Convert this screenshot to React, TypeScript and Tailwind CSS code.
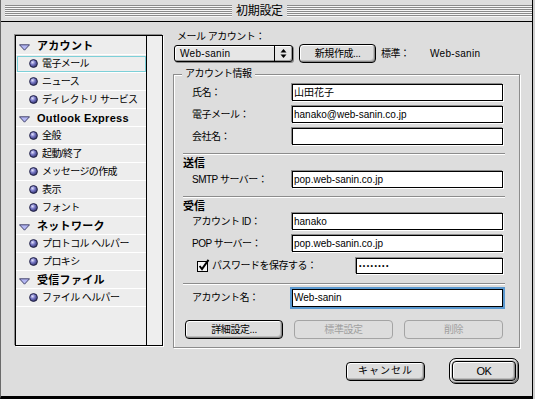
import React, { useId } from "react";

function Stripes({ className = "" }: { className?: string }) {
  return (
    <div className={`flex flex-col ${className}`}>
      {[0, 1, 2, 3, 4, 5].map((i) => (
        <React.Fragment key={i}>
          <div className="h-px bg-[#8a8a8a]" />
          <div className="h-px bg-[#f6f6f6]" />
        </React.Fragment>
      ))}
    </div>
  );
}

function Bullet() {
  const id = useId();
  return (
    <svg width="9" height="9" viewBox="0 0 9 9" className="shrink-0">
      <defs>
        <radialGradient id={id} cx="38%" cy="35%" r="70%">
          <stop offset="0%" stopColor="#e4e4ff" />
          <stop offset="45%" stopColor="#7676c4" />
          <stop offset="100%" stopColor="#2c2c66" />
        </radialGradient>
      </defs>
      <circle cx="4.5" cy="4.5" r="3.9" fill={`url(#${id})`} stroke="#1c1c3c" strokeWidth="0.9" />
    </svg>
  );
}

function Tri() {
  return (
    <svg width="11" height="7" viewBox="0 0 11 7" className="shrink-0 mt-[3px]">
      <path d="M0.5 0.8 H10.5 L5.5 6.2 Z" fill="#b3b6f2" stroke="#33335e" strokeWidth="0.9" />
    </svg>
  );
}

function Header({ label }: { label: string }) {
  return (
    <div className="h-[18px] flex items-center border-b border-b-white">
      <div className="ml-[3px]">
        <Tri />
      </div>
      <span className="ml-[7px] font-bold text-[11px] leading-[14px] tracking-[0.3px]">{label}</span>
    </div>
  );
}

function Item({ label, selected = false }: { label: string; selected?: boolean }) {
  return (
    <div className="relative h-[18px] flex items-center border-b border-b-white">
      {selected && <div className="absolute left-[1px] right-0 top-[1px] bottom-0 border border-[#7dd0d8]" />}
      <div className="ml-[13px] flex items-center">
        <Bullet />
      </div>
      <span className="ml-[4px] tracking-[-0.6px] leading-[12px]">{label}</span>
    </div>
  );
}

function Field({ className = "", children }: { className?: string; children?: React.ReactNode }) {
  return (
    <div
      className={`bg-white border border-black shadow-[-1px_-1px_0_#8c8c8c,1px_1px_0_#ffffff] flex items-center pl-[1px] whitespace-nowrap overflow-hidden ${className}`}
    >
      {children}
    </div>
  );
}

function Row({ label, children, className = "" }: { label: string; children?: React.ReactNode; className?: string }) {
  return (
    <div className={`flex items-center w-[319px] ${className}`}>
      <span className="w-[108px] pl-[8px] tracking-[-0.5px] whitespace-nowrap">{label}</span>
      {children}
    </div>
  );
}

function Sep({ className = "" }: { className?: string }) {
  return <div className={`h-[2px] w-[322px] -ml-[1px] border-t border-t-[#8c8c8c] border-b border-b-white ${className}`} />;
}

function Btn({
  children,
  className = "",
  disabled = false,
}: {
  children?: React.ReactNode;
  className?: string;
  disabled?: boolean;
}) {
  return (
    <div
      className={`flex items-center justify-center rounded-[4px] border bg-[#dddddd] tracking-[-0.4px] ${
        disabled
          ? "border-[#a4a4a4] text-[#a0a0a0]"
          : "border-black shadow-[inset_1px_1px_0_#ffffff,inset_-1px_-1px_0_#888888,inset_-2px_-2px_0_#bbbbbb]"
      } ${className}`}
    >
      {children}
    </div>
  );
}

export default function App() {
  return (
    <div className="w-[535px] h-[399px] bg-[#cfcfcf] font-['Liberation_Sans','Noto_Sans_CJK_JP',sans-serif] text-black text-[10px] leading-[12px]">
      <div className="w-[533px] h-[399px] flex flex-col bg-[#dddddd] border-l border-l-[#6a6a6a] border-r border-r-black border-b-[3px] border-b-black">
        {/* title bar */}
        <div className="h-[22px] shrink-0 flex items-center pl-[4px] border-b border-b-black">
          <Stripes className="w-[227px]" />
          <span className="text-[12px] leading-[14px] mx-[4px] tracking-[-0.3px]">初期設定</span>
          <Stripes className="flex-1" />
        </div>

        {/* body */}
        <div className="flex-1 flex">
          {/* left list */}
          <div className="ml-[14px] mt-[13px] w-[148px] h-[311px] flex border border-black bg-[#ededed] shadow-[-1px_-1px_0_#8c8c8c,1px_1px_0_#ffffff]">
            <div className="w-[130px] pt-[1px] flex flex-col">
              <Header label="アカウント" />
              <Item label="電子メール" selected />
              <Item label="ニュース" />
              <Item label="ディレクトリ サービス" />
              <Header label="Outlook Express" />
              <Item label="全般" />
              <Item label="起動/終了" />
              <Item label="メッセージの作成" />
              <Item label="表示" />
              <Item label="フォント" />
              <Header label="ネットワーク" />
              <Item label="プロトコル ヘルパー" />
              <Item label="プロキシ" />
              <Header label="受信ファイル" />
              <Item label="ファイル ヘルパー" />
            </div>
            <div className="flex-1 border-l border-l-black bg-[#eeeeee]" />
          </div>

          {/* right column */}
          <div className="ml-[10px] w-[347px] pt-[8px] flex flex-col">
            <div className="ml-[4px] leading-[14px] tracking-[-0.5px]">メール アカウント：</div>
            <div className="h-[19px] flex items-center">
              <div className="ml-[1px] w-[119px] h-[17px] rounded-[3px] border border-black bg-[#e6e6e6] shadow-[inset_1px_1px_0_#ffffff,inset_-1px_-1px_0_#999999,1px_1px_0_#8a8a8a] flex">
                <span className="flex-1 pl-[5px] flex items-center tracking-[0.3px]">Web-sanin</span>
                <div className="w-[18px] border-l border-l-black flex items-center justify-center">
                  <svg width="7" height="11" viewBox="0 0 7 11">
                    <path d="M3.5 1 L6.5 4.5 H0.5 Z" fill="#000" />
                    <path d="M0.5 6.5 H6.5 L3.5 10 Z" fill="#000" />
                  </svg>
                </div>
              </div>
              <Btn className="ml-[6px] w-[77px] h-[19px]">新規作成...</Btn>
              <span className="ml-[5px] w-[49px] tracking-[-0.5px]">標準：</span>
              <span className="tracking-[0.3px]">Web-sanin</span>
            </div>

            {/* group box */}
            <div className="relative mt-[11px] w-[347px] h-[274px] border border-[#8c8c8c] shadow-[inset_1px_1px_0_#ffffff,1px_1px_0_#ffffff] px-[10px] pt-[9px] flex flex-col">
              <span className="absolute -top-[7px] left-[8px] px-[3px] bg-[#dddddd] leading-[12px] tracking-[-0.5px]">
                アカウント情報
              </span>
              <Row label="氏名：" className="h-[17px]">
                <Field className="w-[211px] h-[17px]">山田花子</Field>
              </Row>
              <Row label="電子メール：" className="h-[17px] mt-[5px]">
                <Field className="w-[211px] h-[17px]">hanako@web-sanin.co.jp</Field>
              </Row>
              <Row label="会社名：" className="h-[17px] mt-[5px]">
                <Field className="w-[211px] h-[17px]" />
              </Row>
              <Sep className="mt-[8px]" />
              <div className="mt-[2px] h-[12px] font-bold text-[11px] leading-[12px] -ml-[1px]">送信</div>
              <Row label="SMTP サーバー：" className="h-[17px] mt-[2px]">
                <Field className="w-[211px] h-[17px]">pop.web-sanin.co.jp</Field>
              </Row>
              <Sep className="mt-[8px]" />
              <div className="mt-[2px] h-[12px] font-bold text-[11px] leading-[12px] -ml-[1px]">受信</div>
              <Row label="アカウント ID：" className="h-[17px] mt-[1px]">
                <Field className="w-[211px] h-[17px]">hanako</Field>
              </Row>
              <Row label="POP サーバー：" className="h-[17px] mt-[5px]">
                <Field className="w-[211px] h-[17px]">pop.web-sanin.co.jp</Field>
              </Row>
              <div className="mt-[5px] h-[17px] w-[319px] flex items-center">
                <svg width="13" height="13" viewBox="0 0 13 13" className="ml-[13px] shrink-0">
                  <rect x="0.5" y="2.5" width="10" height="10" fill="#f4f4f4" stroke="#000" />
                  <path d="M2.6 7 L5 10 L11.5 0.8" fill="none" stroke="#000" strokeWidth="2" />
                </svg>
                <span className="ml-[2px] tracking-[-0.5px]">パスワードを保存する：</span>
                <Field className="ml-auto w-[147px] h-[16px] pl-[2px]">
                  <span className="text-[7px] tracking-[1.4px] leading-[8px]">••••••••</span>
                </Field>
              </div>
              <Sep className="mt-[9px]" />
              <Row label="アカウント名：" className="h-[18px] mt-[4px]">
                <Field className="w-[211px] h-[18px] ring-2 ring-[#5a98cf]">Web-sanin</Field>
              </Row>
              <div className="mt-[13px] flex gap-[11px] ml-[1px]">
                <Btn className="w-[98px] h-[19px]">詳細設定...</Btn>
                <Btn className="w-[99px] h-[19px]" disabled>
                  標準設定
                </Btn>
                <Btn className="w-[99px] h-[19px]" disabled>
                  削除
                </Btn>
              </div>
            </div>

            {/* bottom buttons */}
            <div className="mt-[10px] flex items-center justify-end gap-[24px] pr-[1px]">
              <Btn className="w-[79px] h-[19px] tracking-[1px]">キャンセル</Btn>
              <div className="w-[70px] h-[26px] rounded-[7px] border border-black bg-[#cccccc] p-[2px] shadow-[inset_1px_1px_0_#ffffff,inset_-1px_-1px_0_#777777]">
                <Btn className="w-full h-full text-[11px]">OK</Btn>
              </div>
            </div>
          </div>
        </div>
      </div>
    </div>
  );
}
